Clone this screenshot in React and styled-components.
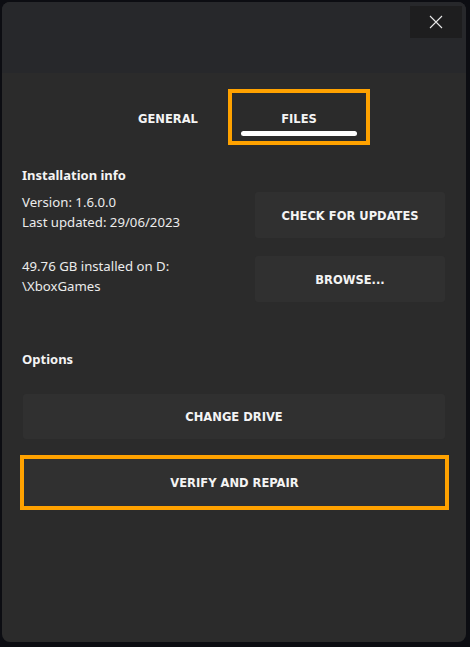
import React from "react";
import styled, { createGlobalStyle } from "styled-components";

const Global = createGlobalStyle`
  html, body {
    margin: 0;
    padding: 0;
    background: #0c0d12;
  }
  body {
    font-family: "Noto Sans", "Open Sans", sans-serif;
    color: #f2f2f2;
  }
`;

const Dialog = styled.div`
  margin: 2px 0 0 2px;
  width: 464px;
  height: 640px;
  border-radius: 8px;
  overflow: hidden;
  background: #2b2b2b;
  display: flex;
  flex-direction: column;
`;

const Header = styled.header`
  height: 71px;
  background: #27282b;
  display: flex;
  justify-content: flex-end;
  align-items: flex-start;
  padding: 4px 4px 0 0;
  box-sizing: border-box;
`;

const CloseButton = styled.button`
  width: 52px;
  height: 32px;
  border: none;
  background: #1e1e1f;
  display: flex;
  align-items: center;
  justify-content: center;
  padding: 0;
  color: #e8e8e8;
`;

const Tabs = styled.nav`
  display: flex;
  justify-content: center;
  padding: 16px 0 0 4px;
`;

const Tab = styled.div`
  position: relative;
  width: ${(p) => (p.$active ? "134px" : "112px")};
  height: 46px;
  display: flex;
  align-items: center;
  justify-content: center;
  padding: 2px 0 0 ${(p) => (p.$active ? "0" : "6px")};
  box-sizing: content-box;
  border: 4px solid ${(p) => (p.$focused ? "#ffa200" : "transparent")};
  font-family: "DejaVu Sans Condensed", "DejaVu Sans", sans-serif;
  font-weight: bold;
  font-size: 12.8px;
  color: #f4f4f4;
`;

const Underline = styled.span`
  position: absolute;
  left: 9px;
  right: 9px;
  bottom: 5px;
  height: 5px;
  border-radius: 3px;
  background: #ffffff;
`;

const Body = styled.main`
  padding: 20px 21px 0 21px;
  display: flex;
  flex-direction: column;
`;

const SectionTitle = styled.h3`
  margin: 0 0 0 -1px;
  font-size: 13px;
  font-weight: bold;
  line-height: 20px;
  color: #f4f4f4;
`;

const InfoGrid = styled.div`
  margin-top: 7px;
  display: grid;
  grid-template-columns: 1fr 190px;
  row-gap: 18px;
  align-items: start;
`;

const InfoText = styled.div`
  margin-left: -1px;
  font-size: 13.2px;
  line-height: 20px;
  color: #ececec;
`;

const ActionButton = styled.button`
  height: ${(p) => p.$h || 46}px;
  width: 100%;
  border: none;
  border-radius: 3px;
  background: #303030;
  color: #f4f4f4;
  font-family: "DejaVu Sans Condensed", "DejaVu Sans", sans-serif;
  font-weight: bold;
  font-size: 12.8px;
  padding: 0;
`;

const FocusRing = styled.div`
  margin: 16px -4px 0 -3px;
  border: 4px solid #ffa200;
  padding: 0;
`;

const Options = styled.div`
  margin-top: 47px;
  display: flex;
  flex-direction: column;
`;

const OptionsList = styled.div`
  margin-top: 25px;
  display: flex;
  flex-direction: column;
`;

export default function App() {
  return (
    <>
      <Global />
      <Dialog>
        <Header>
          <CloseButton aria-label="Close">
            <svg width="14" height="14" viewBox="0 0 14 14">
              <path d="M1 1 L13 13 M13 1 L1 13" stroke="currentColor" strokeWidth="1.1" />
            </svg>
          </CloseButton>
        </Header>
        <Tabs>
          <Tab>GENERAL</Tab>
          <Tab $active $focused>
            FILES
            <Underline />
          </Tab>
        </Tabs>
        <Body>
          <SectionTitle>Installation info</SectionTitle>
          <InfoGrid>
            <InfoText>
              Version: 1.6.0.0
              <br />
              Last updated: 29/06/2023
            </InfoText>
            <ActionButton>CHECK FOR UPDATES</ActionButton>
            <InfoText>
              49.76 GB installed on D:
              <br />
              \XboxGames
            </InfoText>
            <ActionButton>BROWSE...</ActionButton>
          </InfoGrid>
          <Options>
            <SectionTitle>Options</SectionTitle>
            <OptionsList>
              <ActionButton $h={45}>CHANGE DRIVE</ActionButton>
              <FocusRing>
                <ActionButton $h={47}>VERIFY AND REPAIR</ActionButton>
              </FocusRing>
            </OptionsList>
          </Options>
        </Body>
      </Dialog>
    </>
  );
}
